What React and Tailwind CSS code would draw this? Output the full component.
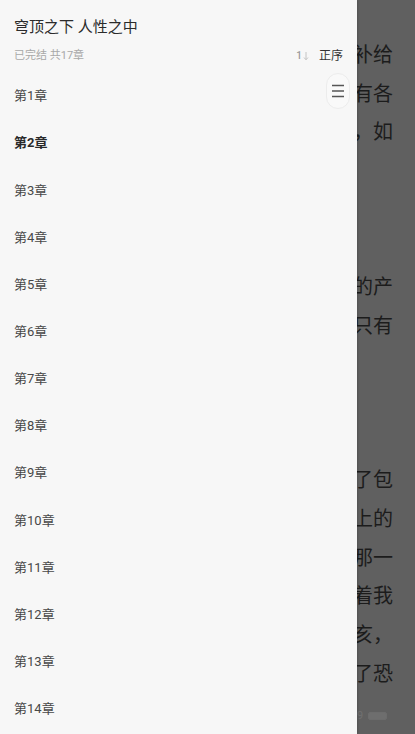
import React from "react";

const readerLines = [
  "补给",
  "有各",
  "，如",
  "",
  "",
  "",
  "的产",
  "只有",
  "",
  "",
  "",
  "了包",
  "上的",
  "那一",
  "着我",
  "亥，",
  "了恐",
];

const chapters = Array.from({ length: 14 }, (_, i) => i + 1);

export default function App() {
  return (
    <div
      className="relative w-[415px] h-[734px] overflow-hidden bg-[#606060]"
      style={{ fontFamily: 'Roboto, "Noto Sans CJK SC", "Noto Sans", sans-serif' }}
    >
      {/* reading page behind (dimmed) */}
      <div className="flex flex-col pt-[35.5px]">
        {readerLines.map((t, i) => (
          <div
            key={i}
            className="h-[38.7px] flex items-center justify-end pr-[22px] whitespace-nowrap text-[20px] leading-none text-[#1c1c1c]"
          >
            {t}
          </div>
        ))}
      </div>
      <div className="absolute left-[357px] top-[710px] flex items-center gap-[5px]">
        <span className="text-[11px] leading-none text-[#707070]">9</span>
        <div className="w-[19px] h-[8px] rounded-[2px] border border-[#6c6c6c] bg-[#6e6e6e]"></div>
      </div>

      {/* drawer */}
      <div className="absolute left-0 top-0 h-full w-[357px] bg-[#f7f7f7] shadow-[1px_0_2px_rgba(0,0,0,0.15)]">
        <div className="pl-[14px] pr-[14px]">
          <div className="pt-[17px] h-[37px] text-[15px] leading-[20px] text-[#2b2b2b]">
            穹顶之下 人性之中
          </div>
          <div className="mt-[11px] h-[16px] flex items-center justify-between">
            <span className="text-[11px] leading-[16px] text-[#a8a8a8]">已完结 共17章</span>
            <div className="flex items-center gap-[10px]">
              <div className="flex items-center h-[12px]">
                <span className="text-[10px] leading-[12px] font-medium text-[#9a9a9a]">1</span>
                <svg width="6" height="10" viewBox="0 0 6 10" className="ml-[1px]">
                  <path d="M3 1 V8.5 M1 6.5 L3 8.8 L5 6.5" stroke="#c4c4c4" strokeWidth="1" fill="none" />
                </svg>
              </div>
              <span className="text-[12px] leading-[16px] text-[#333333]">正序</span>
            </div>
          </div>
        </div>
        <div className="mt-[8.5px] flex flex-col">
          {chapters.map((n) => (
            <div
              key={n}
              className={
                "h-[47.15px] flex items-center pl-[14px] text-[13px] " +
                (n === 2 ? "font-bold text-[#2a2a2a]" : "text-[#484848]")
              }
            >
              第{n}章
            </div>
          ))}
        </div>

        {/* fast scroll handle */}
        <div className="absolute left-[326px] top-[73px] w-[24px] h-[36px] rounded-full bg-[#f9f9f9] border border-[#ececec] flex items-center justify-center">
          <svg width="14" height="14" viewBox="0 0 14 14">
            <path d="M1 1.5 H13 M1 7 H13 M1 12.5 H13" stroke="#555555" strokeWidth="1.3" fill="none" />
          </svg>
        </div>
      </div>
    </div>
  );
}
